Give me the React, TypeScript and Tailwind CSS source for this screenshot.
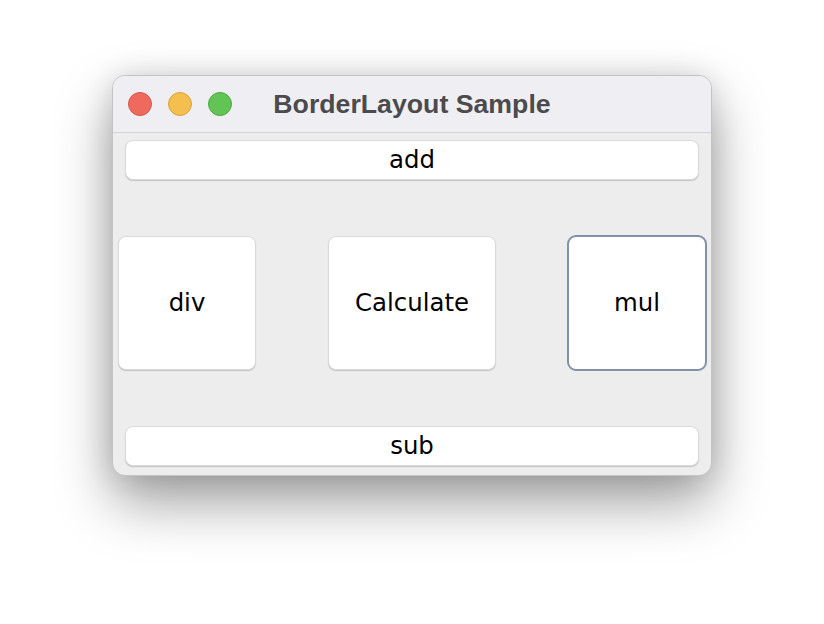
const btn =
  "flex items-center justify-center bg-white rounded-[8px] border border-[#dadada] shadow-[0_1px_1px_rgba(0,0,0,0.18)] text-[24.4px] text-black font-['DejaVu_Sans',sans-serif]";

export default function App() {
  return (
    <div className="w-[824px] h-[624px] bg-white pt-[75px] pl-[112px]">
      {/* window */}
      <div className="w-[600px] h-[401px] rounded-[13px] border border-[#c4c4c4] bg-[#ededed] overflow-hidden flex flex-col shadow-[0_26px_55px_rgba(0,0,0,0.38),0_0_28px_rgba(0,0,0,0.12)]">
        {/* title bar */}
        <div className="h-[57px] shrink-0 bg-[#efeff3] border-b border-[#d3d3d6] grid grid-cols-[1fr_auto_1fr] items-center">
          <div className="flex items-center gap-[16px] pl-[15px]">
            <span className="w-[24px] h-[24px] rounded-full bg-[#ee6a5e] border border-[#d5564b]" />
            <span className="w-[24px] h-[24px] rounded-full bg-[#f5bf4f] border border-[#d9a33e]" />
            <span className="w-[24px] h-[24px] rounded-full bg-[#61c454] border border-[#4caa3f]" />
          </div>
          <div className="text-[26.7px] font-bold text-[#4b4b4d] font-['Liberation_Sans',sans-serif] leading-none">
            BorderLayout Sample
          </div>
          <div />
        </div>

        {/* content */}
        <div className="flex-1 flex flex-col">
          <div className="px-[12px] pt-[7px]">
            <div className={`${btn} h-[40px]`}>add</div>
          </div>

          <div className="mt-[55px] h-[136px] flex items-center pl-[5px] pr-[4px]">
            <div className={`${btn} w-[138px] h-[134px]`}>div</div>
            <div className={`${btn} w-[168px] h-[134px] ml-[72px]`}>Calculate</div>
            <div className="ml-[71px] w-[140px] h-[136px] flex items-center justify-center bg-white rounded-[9px] border-[2.5px] border-[#8092a8] text-[24.4px] text-black font-['DejaVu_Sans',sans-serif]">
              mul
            </div>
          </div>

          <div className="px-[12px] mt-[55px]">
            <div className={`${btn} h-[40px]`}>sub</div>
          </div>
        </div>
      </div>
    </div>
  );
}
